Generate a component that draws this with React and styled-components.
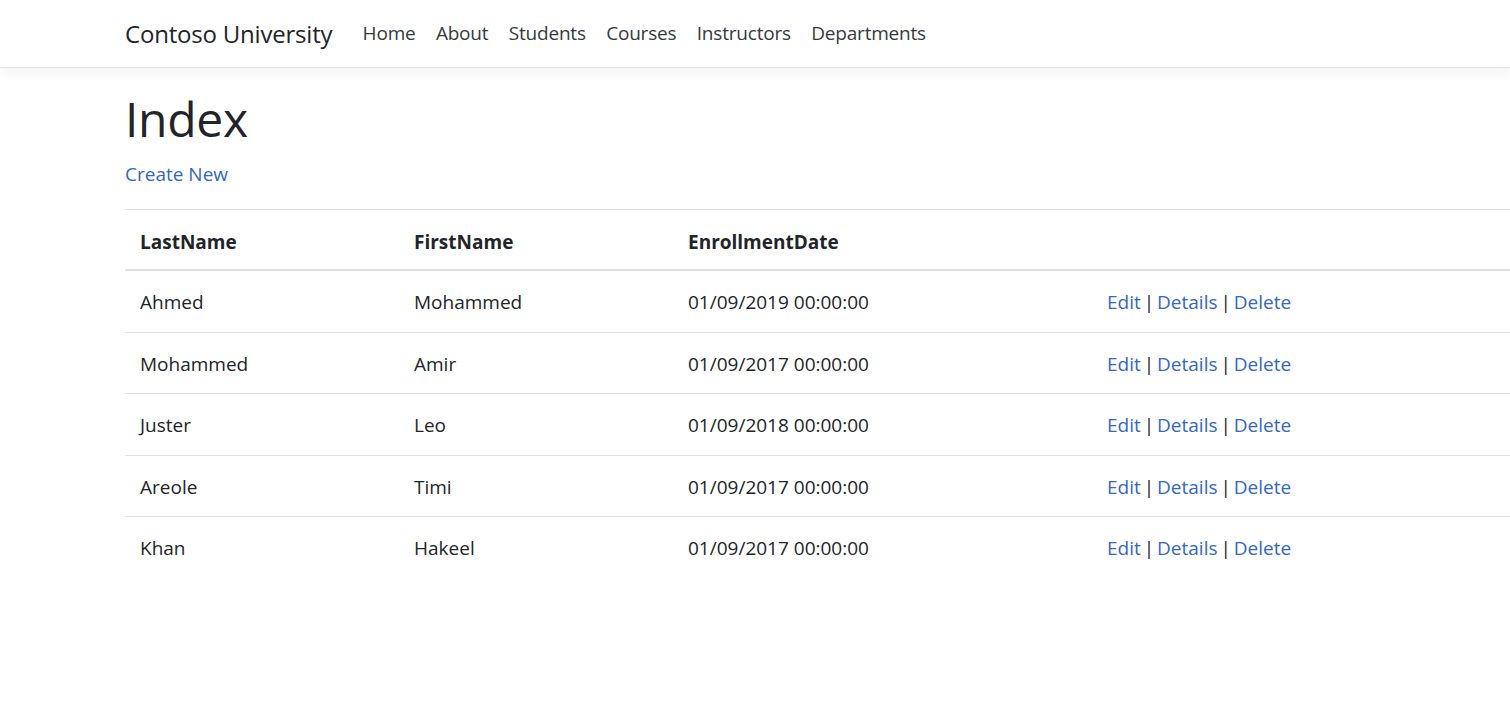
import React from 'react';
import styled, { createGlobalStyle } from 'styled-components';

const GlobalStyle = createGlobalStyle`
  html, body {
    margin: 0;
    padding: 0;
    background: #fff;
  }
  body {
    font-family: "Open Sans", "Noto Sans", sans-serif;
    font-size: 20px;
    line-height: 1.5;
    color: #212529;
    overflow-x: hidden;
  }
`;

const linkColor = '#3367c1';

const Header = styled.header`
  height: 67px;
  border-bottom: 1px solid #dee2e6;
  box-shadow: 0 5px 15px rgba(0, 0, 0, 0.05);
  background: #fff;
  margin-bottom: 21px;
`;

const Navbar = styled.nav`
  height: 100%;
  display: flex;
  align-items: center;
  padding-left: 125px;
`;

const Brand = styled.a`
  font-size: 24px;
  color: #212529;
  text-decoration: none;
  margin-right: 20px;
  letter-spacing: -0.2px;
`;

const NavList = styled.ul`
  display: flex;
  list-style: none;
  margin: 0;
  padding: 0;
`;

const NavLink = styled.a`
  display: block;
  padding: 0 10.2px;
  font-size: 19px;
  color: #343a40;
  text-decoration: none;
  letter-spacing: -0.2px;
`;

const Main = styled.main`
  padding-left: 125px;
`;

const Title = styled.h1`
  margin: 0 0 10px;
  font-size: 48px;
  font-weight: 500;
  line-height: 60px;
  letter-spacing: -0.3px;
`;

const Link = styled.a`
  color: ${linkColor};
  text-decoration: none;
  font-size: 19px;
`;

const Para = styled.p`
  margin: 0 0 20px;
`;

const Table = styled.table`
  width: 1400px;
  table-layout: fixed;
  border-collapse: collapse;
  font-size: 19px;
`;

const Th = styled.th`
  text-align: left;
  font-weight: 700;
  padding: 17px 15px 12px;
  border-top: 1px solid #dee2e6;
  border-bottom: 2px solid #dee2e6;
  width: ${(p) => p.w || 'auto'};
  line-height: 30px;
`;

const Td = styled.td`
  padding: 16px 15px 14.5px;
  border-top: 1px solid #dee2e6;
  line-height: 30px;
  vertical-align: top;
  white-space: nowrap;
`;

const ActionCell = styled(Td)`
  word-spacing: -2px;
`;

const Sep = styled.span`
  color: #212529;
`;

const students = [
  ['Ahmed', 'Mohammed', '01/09/2019 00:00:00'],
  ['Mohammed', 'Amir', '01/09/2017 00:00:00'],
  ['Juster', 'Leo', '01/09/2018 00:00:00'],
  ['Areole', 'Timi', '01/09/2017 00:00:00'],
  ['Khan', 'Hakeel', '01/09/2017 00:00:00'],
];

const navItems = ['Home', 'About', 'Students', 'Courses', 'Instructors', 'Departments'];

export default function App() {
  return (
    <>
      <GlobalStyle />
      <Header>
        <Navbar>
          <Brand href="#">Contoso University</Brand>
          <NavList>
            {navItems.map((n) => (
              <li key={n}>
                <NavLink href="#">{n}</NavLink>
              </li>
            ))}
          </NavList>
        </Navbar>
      </Header>
      <Main>
        <Title>Index</Title>
        <Para>
          <Link href="#">Create New</Link>
        </Para>
        <Table>
          <thead>
            <tr>
              <Th w="244px">LastName</Th>
              <Th w="244px">FirstName</Th>
              <Th w="389px">EnrollmentDate</Th>
              <Th />
            </tr>
          </thead>
          <tbody>
            {students.map((s) => (
              <tr key={s[0]}>
                <Td>{s[0]}</Td>
                <Td>{s[1]}</Td>
                <Td>{s[2]}</Td>
                <ActionCell>
                  <Link href="#">Edit</Link> <Sep>|</Sep>{' '}
                  <Link href="#">Details</Link> <Sep>|</Sep>{' '}
                  <Link href="#">Delete</Link>
                </ActionCell>
              </tr>
            ))}
          </tbody>
        </Table>
      </Main>
    </>
  );
}
